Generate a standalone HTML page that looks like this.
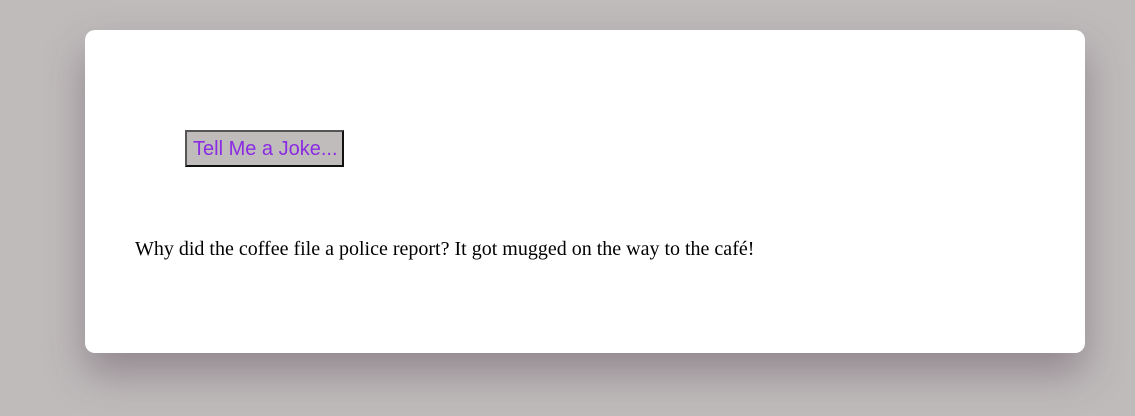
<!DOCTYPE html>
<html><head><style>
body{margin:0;background:#bfbbbb;width:1135px;height:416px;overflow:hidden;position:relative}
.card{position:absolute;left:85px;top:30px;width:1000px;height:323px;background:#fff;border-radius:10px;box-shadow:0 20px 40px rgba(60,40,60,0.35)}
.btn{position:absolute;left:100px;top:100px;box-sizing:border-box;width:159px;height:37px;background:#c0bcbc;border:2px solid;border-color:#555 #111 #111 #555;font:20px "Liberation Sans",Arial,sans-serif;color:#8a2be2;line-height:34px;padding-left:6px}
.joke{position:absolute;left:50px;top:208px;font:20px "Liberation Serif",serif;color:#000;white-space:nowrap}
</style></head><body>
<div class="card">
<div class="btn">Tell Me a Joke...</div>
<div class="joke">Why did the coffee file a police report? It got mugged on the way to the café!</div>
</div>
</body></html>
